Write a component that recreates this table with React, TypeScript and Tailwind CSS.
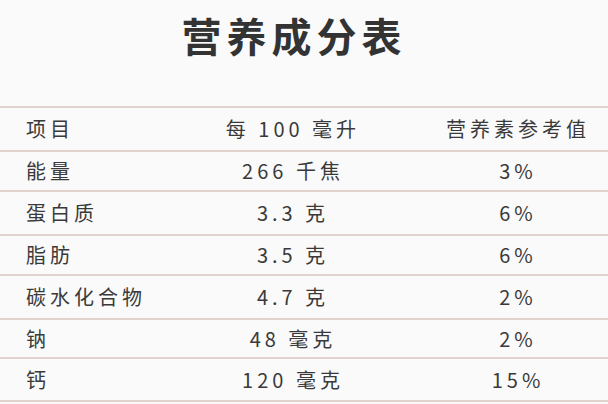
import React from "react"

type Row = { name: string; per100: string; nrv: string; h: string }

const rows: Row[] = [
  { name: "能量", per100: "266 千焦", nrv: "3%", h: "h-[40px]" },
  { name: "蛋白质", per100: "3.3 克", nrv: "6%", h: "h-[44px]" },
  { name: "脂肪", per100: "3.5 克", nrv: "6%", h: "h-[40px]" },
  { name: "碳水化合物", per100: "4.7 克", nrv: "2%", h: "h-[44px]" },
  { name: "钠", per100: "48 毫克", nrv: "2%", h: "h-[39px]" },
  { name: "钙", per100: "120 毫克", nrv: "15%", h: "h-[43px]" },
]

function TableRow({
  cells,
  h,
}: {
  cells: [string, string, string]
  h: string
}) {
  return (
    <div
      className={`grid grid-cols-[190px_202px_1fr] items-center border-b-2 border-[#e2d3cf] text-[20px] leading-none tracking-[4px] text-[#3a3a3a] ${h}`}
    >
      <span className="pl-[26px]">{cells[0]}</span>
      <span className="pl-[4px] text-center">{cells[1]}</span>
      <span className="pl-[36px] text-center">{cells[2]}</span>
    </div>
  )
}

export default function App() {
  return (
    <div
      className="h-[404px] w-[608px] overflow-hidden bg-[#fafafa]"
      style={{ fontFamily: '"Noto Sans CJK SC", "Noto Sans", sans-serif' }}
    >
      <div className="flex h-[106px] justify-center pt-[15px]">
        <h1 className="mr-[20px] text-[40px] font-bold leading-[40px] tracking-[5px] text-[#333333]">
          营养成分表
        </h1>
      </div>
      <div className="border-t-2 border-[#e2d3cf]">
        <TableRow cells={["项目", "每 100 毫升", "营养素参考值"]} h="h-[44px]" />
        {rows.map((r) => (
          <TableRow key={r.name} cells={[r.name, r.per100, r.nrv]} h={r.h} />
        ))}
      </div>
    </div>
  )
}
